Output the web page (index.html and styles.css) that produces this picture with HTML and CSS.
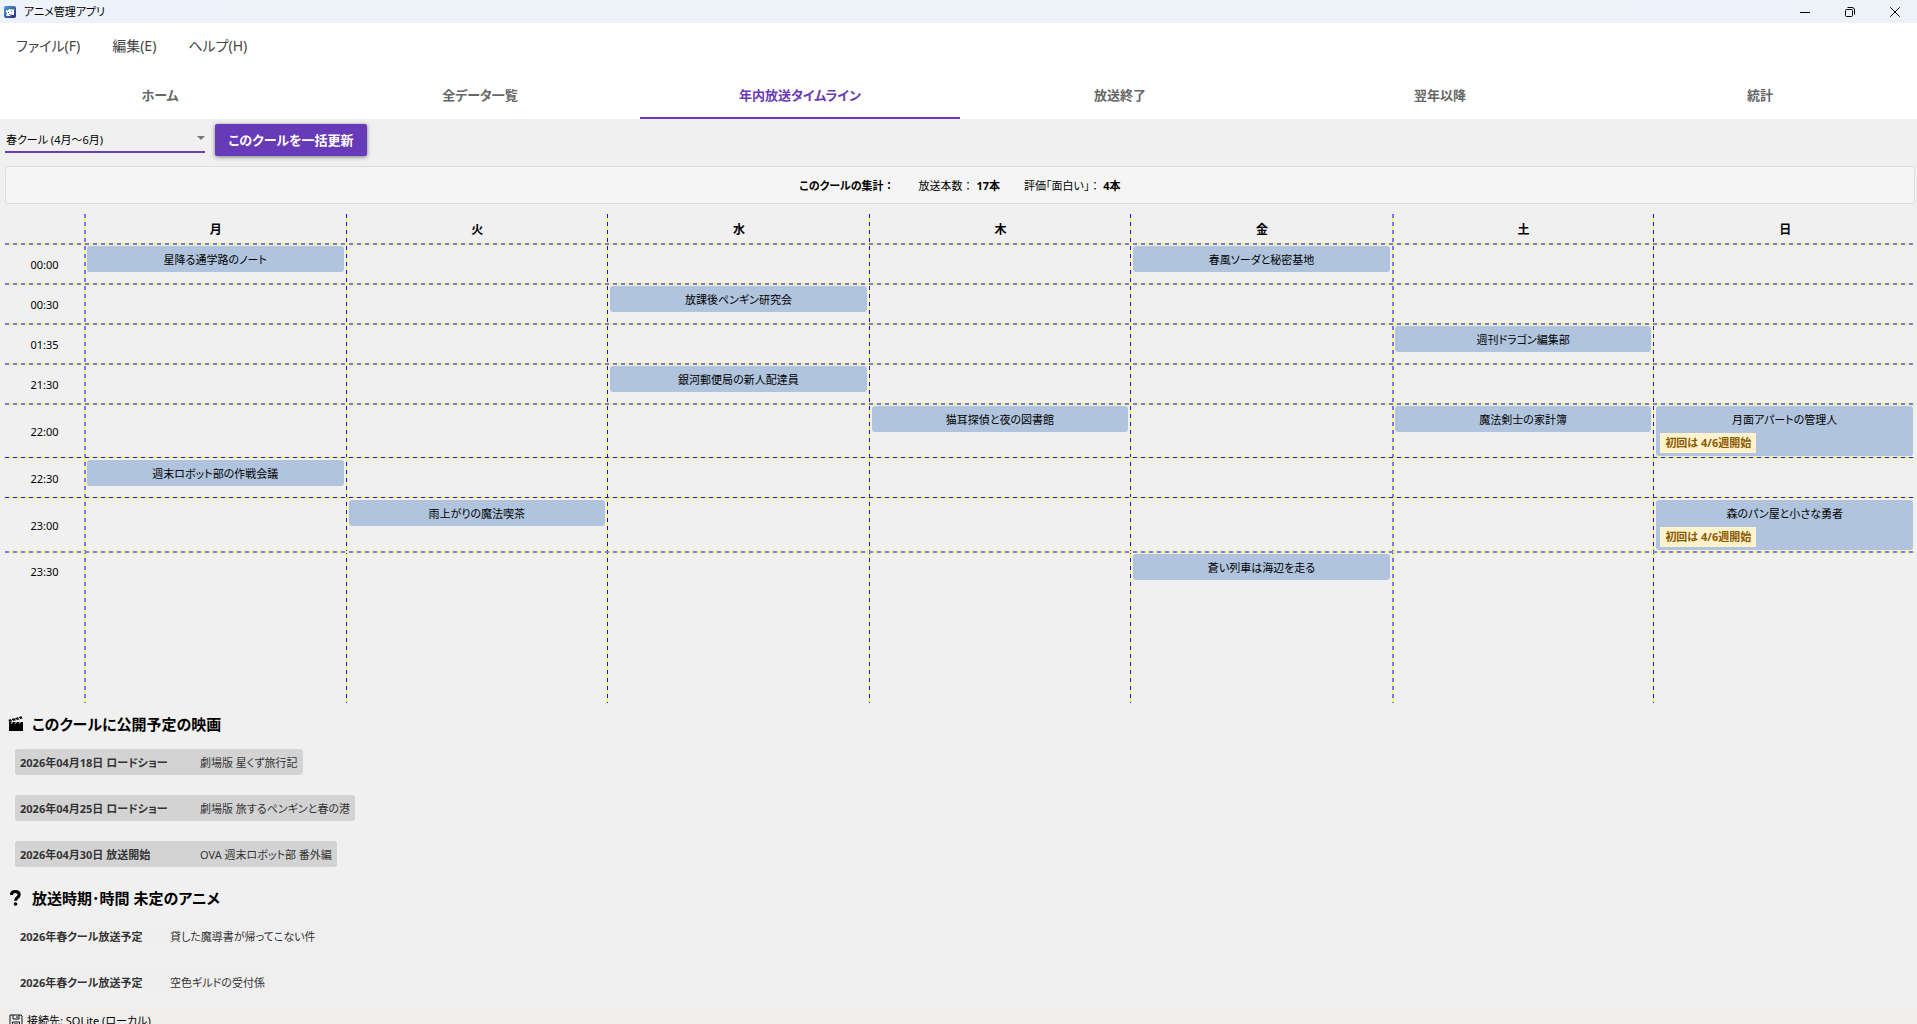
FILE: index.html
```html
<!DOCTYPE html>
<html lang="ja">
<head>
    <meta charset="UTF-8">
    <meta name="viewport" content="width=device-width, initial-scale=1.0">
    <title>アニメ管理アプリ</title>
    <link rel="stylesheet" href="styles.css">
</head>
<body>

<header class="titlebar">
    <svg class="app-icon" viewBox="0 0 12 12" aria-hidden="true">
        <defs>
            <linearGradient id="iconBg" x1="0" y1="0" x2="1" y2="1">
                <stop offset="0" stop-color="#4aa0e8"/>
                <stop offset="1" stop-color="#30247c"/>
            </linearGradient>
        </defs>
        <rect width="12" height="12" rx="2" fill="url(#iconBg)"/>
        <path d="M2 4l2 .5L5 3h5v6H8L7 8l-1 2H3l-1-1 1-2-1-1z" fill="#fff"/>
        <path d="M6 3h4v1H6z" fill="#ffc43a"/>
        <path d="M4 6h1v1H4zM7 5h1v1H7zM5 8h1v1H5z" fill="#3c63b8"/>
    </svg>
    <span class="app-title">アニメ管理アプリ</span>
    <div class="window-buttons">
        <button type="button" aria-label="最小化"><svg viewBox="0 0 10 10"><path d="M0 5.5h10"/></svg></button>
        <button type="button" aria-label="元に戻す"><svg viewBox="0 0 10 10"><rect x=".5" y="2.5" width="7" height="7" rx="1"/><path d="M2.5.5H7A2.5 2.5 0 0 1 9.5 3v4.5"/></svg></button>
        <button type="button" aria-label="閉じる"><svg viewBox="0 0 10 10"><path d="M.3.3l9.4 9.4M9.7.3L.3 9.7"/></svg></button>
    </div>
</header>

<nav class="menu">
    <button type="button">ファイル(F)</button>
    <button type="button">編集(E)</button>
    <button type="button">ヘルプ(H)</button>
</nav>

<nav class="tabs">
    <button type="button">ホーム</button>
    <button type="button">全データ一覧</button>
    <button type="button" class="active">年内放送タイムライン</button>
    <button type="button">放送終了</button>
    <button type="button">翌年以降</button>
    <button type="button">統計</button>
</nav>

<main>
    <div class="toolbar">
        <div class="season">
            <select aria-label="クール">
                <option>春クール (4月～6月)</option>
            </select>
            <svg class="arrow" viewBox="0 0 8 4" aria-hidden="true"><path d="M0 0h8L4 4z"/></svg>
        </div>
        <button type="button" class="update">このクールを一括更新</button>
    </div>

    <div class="summary">
        <strong>このクールの集計<span class="colon">：</span></strong>
        <span>放送本数<span class="colon">：</span> <strong>17本</strong></span>
        <span>評価｢面白い｣<span class="colon">：</span> <strong>4本</strong></span>
    </div>

    <table class="timeline">
        <colgroup>
            <col class="time-col">
            <col class="day soft">
            <col class="day">
            <col class="day">
            <col class="day">
            <col class="day">
            <col class="day soft">
            <col class="day">
        </colgroup>
        <thead>
            <tr><td></td><th>月</th><th>火</th><th>水</th><th>木</th><th>金</th><th>土</th><th>日</th></tr>
        </thead>
        <tbody>
            <tr class="soft">
                <th>00:00</th>
                <td><div class="card">星降る通学路のノート</div></td><td></td><td></td><td></td>
                <td><div class="card">春風ソーダと秘密基地</div></td><td></td><td></td>
            </tr>
            <tr class="soft">
                <th>00:30</th>
                <td></td><td></td><td><div class="card">放課後ペンギン研究会</div></td>
                <td></td><td></td><td></td><td></td>
            </tr>
            <tr class="soft">
                <th>01:35</th>
                <td></td><td></td><td></td><td></td><td></td>
                <td><div class="card">週刊ドラゴン編集部</div></td><td></td>
            </tr>
            <tr class="soft">
                <th>21:30</th>
                <td></td><td></td><td><div class="card">銀河郵便局の新人配達員</div></td>
                <td></td><td></td><td></td><td></td>
            </tr>
            <tr class="soft">
                <th>22:00</th>
                <td></td><td></td><td></td>
                <td><div class="card">猫耳探偵と夜の図書館</div></td><td></td>
                <td><div class="card">魔法剣士の家計簿</div></td>
                <td><div class="card">月面アパートの管理人<span class="badge">初回は 4/6週開始</span></div></td>
            </tr>
            <tr>
                <th>22:30</th>
                <td><div class="card">週末ロボット部の作戦会議</div></td>
                <td></td><td></td><td></td><td></td><td></td><td></td>
            </tr>
            <tr>
                <th>23:00</th>
                <td></td><td><div class="card">雨上がりの魔法喫茶</div></td>
                <td></td><td></td><td></td><td></td>
                <td><div class="card">森のパン屋と小さな勇者<span class="badge">初回は 4/6週開始</span></div></td>
            </tr>
            <tr class="soft last">
                <th>23:30</th>
                <td></td><td></td><td></td><td></td>
                <td><div class="card">蒼い列車は海辺を走る</div></td><td></td><td></td>
            </tr>
        </tbody>
    </table>

    <section class="movies">
        <h2>
            <svg viewBox="0 0 16 16" aria-hidden="true"><path d="M1 7h14v8H1z"/><path d="M.5 3.8L13.8.2l.6 2.2L1.1 6z"/><path d="M1 6h14v2H1z"/><path class="cut" d="M3 3.4l2 1.3M6.5 2.4l2 1.3M10 1.5l2 1.3M4.5 6L3 7.8M8.5 6L7 7.8M12.5 6L11 7.8"/></svg>
            このクールに公開予定の映画
        </h2>
        <ul>
            <li><strong>2026年04月18日 ロードショー</strong>劇場版 星くず旅行記</li>
            <li><strong>2026年04月25日 ロードショー</strong>劇場版 旅するペンギンと春の港</li>
            <li><strong>2026年04月30日 放送開始</strong>OVA 週末ロボット部 番外編</li>
        </ul>
    </section>

    <section class="undecided">
        <h2>
            <svg viewBox="0 0 16 16" aria-hidden="true"><path class="question" d="M3.5 5C3.5 2.500 5 1.500 7.200 1.500s4 1 4 3.200c0 2.800-3.700 2.800-3.700 6"/><circle cx="7.500" cy="14" r="1.800"/></svg>
            放送時期･時間 未定のアニメ
        </h2>
        <ul>
            <li><strong>2026年春クール放送予定</strong>貸した魔導書が帰ってこない件</li>
            <li><strong>2026年春クール放送予定</strong>空色ギルドの受付係</li>
        </ul>
    </section>
</main>

<footer class="statusbar">
    <svg viewBox="0 0 14 14" aria-hidden="true"><path d="M1 1h11l1 1v11H2l-1-1zM4 1v4h6V1M3.500 13V8h7v5M5 10h4"/><path d="M8 2v2"/></svg>
    接続先: SQLite (ローカル)
</footer>

</body>
</html>
```
FILE: styles.css
```css
* {
    box-sizing: border-box;
}

body {
    margin: 0;
    height: 100vh;
    overflow: hidden;
    background-color: #f0f0f0;
    color: #000;
    font-family: "Noto Sans", "Noto Sans CJK JP", sans-serif;
    font-size: 11px;
    line-height: 18px;
    font-feature-settings: "palt";
}

button, select {
    font: inherit;
    font-feature-settings: inherit;
    color: inherit;
    background: none;
    border: none;
    padding: 0;
}

/* window title */
.titlebar {
    display: flex;
    align-items: center;
    height: 23px;
    padding-left: 4px;
    background: linear-gradient(90deg, #eef2fb 0%, #edf3f7 35%, #eef3f7 75%, #edf2fb 90%, #eef3f8 100%);
}

.app-icon {
    width: 12px;
    height: 12px;
    margin-right: 8px;
}

.window-buttons {
    display: flex;
    margin-left: auto;
}

.window-buttons button {
    display: flex;
    align-items: center;
    justify-content: center;
    width: 45px;
    height: 20px;
}

.window-buttons svg {
    width: 10px;
    height: 10px;
    fill: none;
    stroke: #000;
}

/* menu and tabs */
.menu {
    display: flex;
    gap: 32px;
    height: 48px;
    padding: 0 0 2px 16px;
    background-color: #fff;
    color: #444;
    font-size: 14px;
}

.tabs {
    display: flex;
    height: 48px;
    margin-right: -3px;
    background-color: #fff;
    color: #666;
    font-size: 13px;
    font-weight: bold;
}

.tabs button {
    flex: 1;
    border-top: 2px solid transparent;
    border-bottom: 2px solid transparent;
}

.tabs .active {
    color: #673ab7;
    border-bottom-color: #673ab7;
}

/* season selector */
.toolbar {
    display: flex;
    gap: 10px;
    padding: 5px;
}

.season {
    display: flex;
    align-items: center;
    width: 200px;
    height: 29px;
    border-bottom: 2px solid #673ab7;
}

.season select {
    flex: 1;
    height: 27px;
    padding: 4px 0 0 1px;
    appearance: none;
}

.arrow {
    width: 8px;
    height: 4px;
    fill: #777;
}

.update {
    width: 152px;
    height: 32px;
    border-radius: 2px;
    background-color: #673ab7;
    color: #fff;
    font-size: 13px;
    font-weight: bold;
    box-shadow: 0 1px 4px rgba(0, 0, 0, 0.5);
}

.summary {
    display: flex;
    justify-content: center;
    align-items: center;
    gap: 24px;
    height: 38px;
    margin: 5px 2px 10px 5px;
    padding-top: 2px;
    border: 1px solid #ddd;
    border-radius: 3px;
    background-color: #f5f5f5;
}

.colon {
    font-feature-settings: normal;
}

/* timeline */
.timeline {
    width: calc(100% - 7px);
    margin-left: 5px;
    table-layout: fixed;
    border-collapse: collapse;
}

.time-col {
    width: 79px;
}

.timeline .day {
    background: repeating-linear-gradient(180deg, #11f 0 4px, #ff2 4px 8px) no-repeat left top / 1px 100%;
}

.timeline .day.soft {
    background: repeating-linear-gradient(180deg, #7878f5 0 4px, #f8f878 4px 8px) no-repeat left top / 2px 100%;
}

.timeline td, .timeline th {
    padding: 0;
}

.timeline thead tr {
    height: 29px;
}

.timeline thead th {
    padding: 2px 0 0 2px;
    font-size: 12px;
}

.timeline tbody tr {
    height: 40px;
    background: repeating-linear-gradient(90deg, #11f 0 4px, #ff2 4px 8px) no-repeat left top / 100% 1px;
}

.timeline tbody tr.soft {
    background: repeating-linear-gradient(90deg, #7878f5 0 4px, #f8f878 4px 8px) no-repeat left top / 100% 2px;
}

.timeline tbody th {
    padding-top: 3px;
    font-weight: normal;
}

.timeline tbody td {
    padding: 3px 2px 1px 3px;
    vertical-align: top;
}

.timeline tbody .last {
    height: 152px;
}

.timeline .last th {
    padding-top: 12px;
    vertical-align: top;
}

.card {
    padding: 5px 4px 3px;
    border-radius: 3px;
    background-color: #b0c4de;
    text-align: center;
}

.badge {
    display: block;
    width: fit-content;
    margin-top: 4px;
    padding: 1px 5px;
    background-color: #fff2cc;
    color: #8a5a00;
    font-weight: bold;
}

/* lists under the timeline */
section {
    padding-left: 8px;
}

h2 {
    display: flex;
    align-items: center;
    gap: 8px;
    margin: 0;
    height: 42px;
    font-size: 15px;
}

h2 svg {
    width: 16px;
    height: 16px;
}

h2 .cut {
    stroke: #f0f0f0;
}

h2 .question {
    fill: none;
    stroke: #000;
    stroke-width: 3;
}

ul {
    display: flex;
    flex-direction: column;
    align-items: flex-start;
    gap: 20px;
    margin: 0;
    padding: 4px 0 10px 7px;
    list-style: none;
}

li {
    display: flex;
    padding: 5px 5px 3px;
    border-radius: 3px;
    background-color: #d3d3d3;
    color: #333;
}

li strong {
    min-width: 180px;
}

.undecided li {
    background-color: #efefef;
}

.undecided li strong {
    min-width: 150px;
}

.statusbar {
    display: flex;
    align-items: center;
    gap: 4px;
    height: 24px;
    margin-top: 4px;
    padding-left: 9px;
    background-color: #f0eded;
}

.statusbar svg {
    width: 14px;
    height: 14px;
    fill: none;
    stroke: #111;
}
```
